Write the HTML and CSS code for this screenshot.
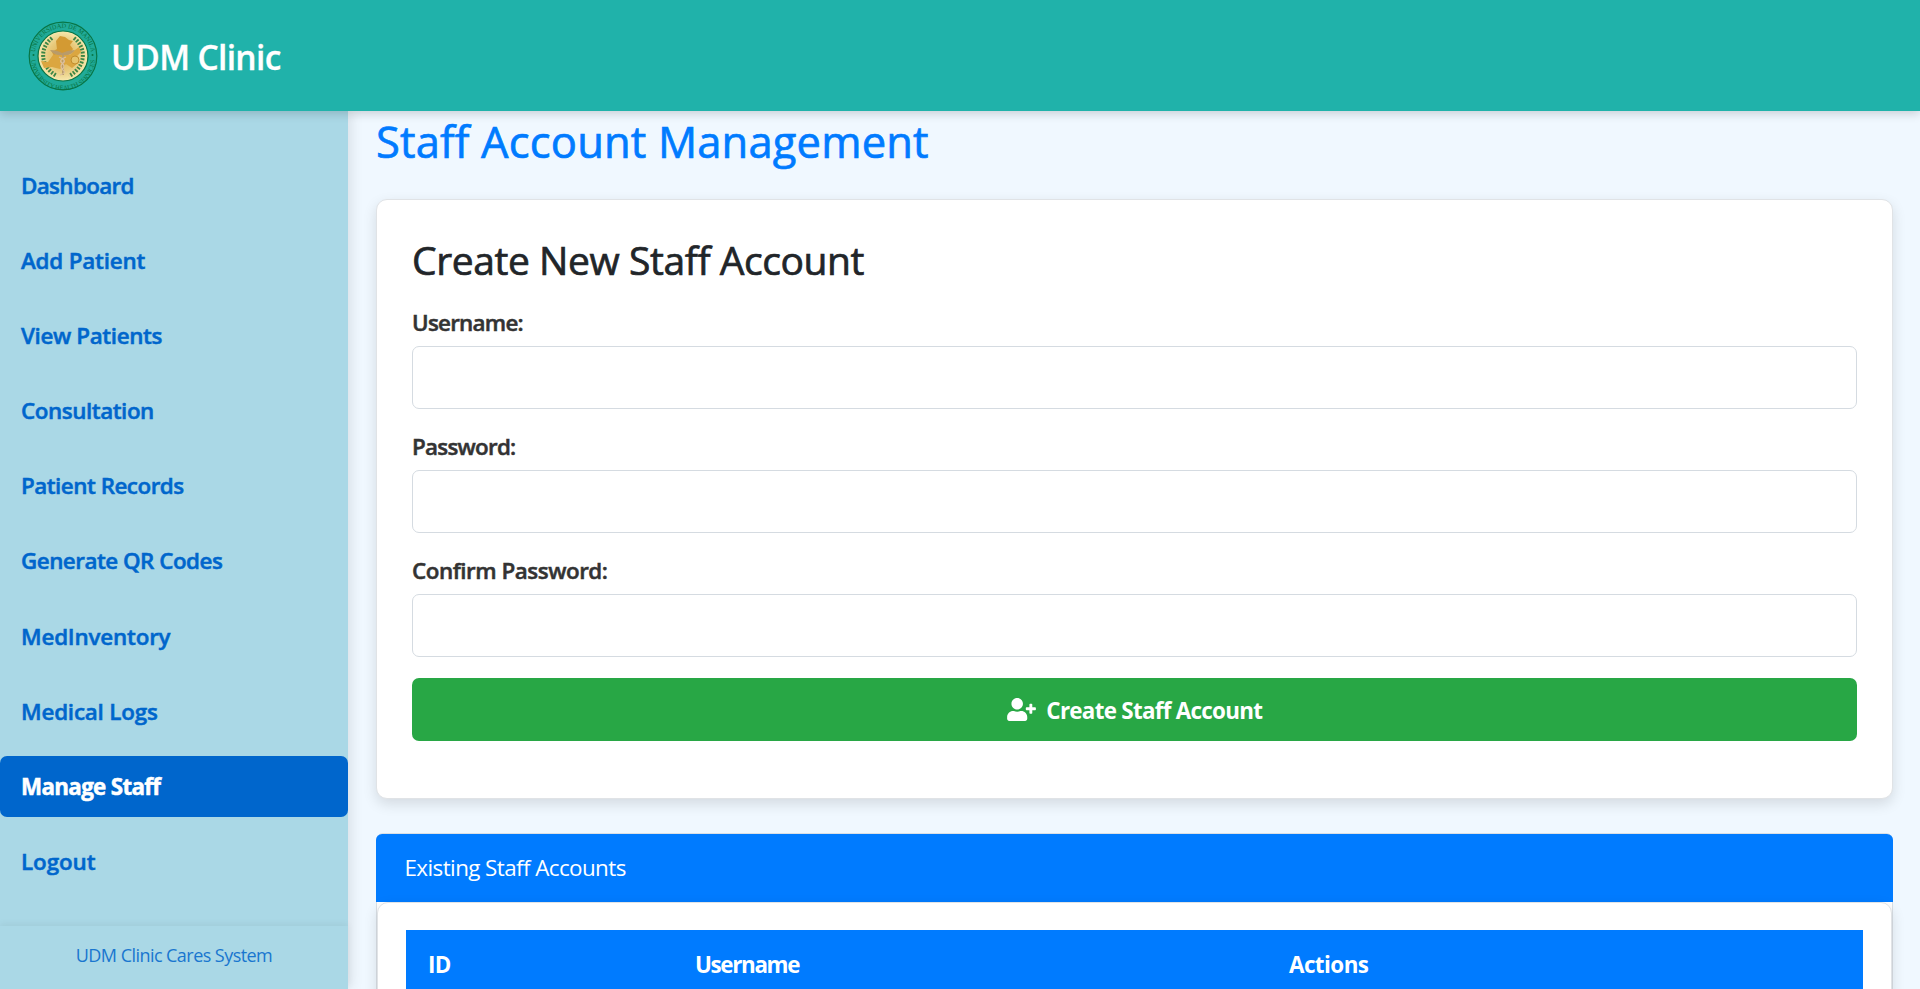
FILE: index.html
```html
<!DOCTYPE html>
<html lang="en">
<head>
<meta charset="utf-8">
<title>UDM Clinic</title>
<link rel="stylesheet" href="styles.css">
</head>
<body>
<header class="topbar">
  <svg class="logo" viewBox="0 0 70 70" role="img" aria-label="University seal">
    <defs>
      <radialGradient id="gold"><stop offset="0" stop-color="#dfae4c"/><stop offset=".6" stop-color="#e8ca7c"/><stop offset="1" stop-color="#f6e8ae"/></radialGradient>
      <path id="ringTop" d="M6.800 39.500A28.500 28.500 0 1 1 63.200 39.500"/>
      <path id="ringBottom" d="M3 37A32 32 0 0 0 67 37"/>
    </defs>
    <circle cx="35" cy="35" r="33.800" fill="#20ab98" stroke="#087545" stroke-width="1.200"/>
    <circle cx="35" cy="35" r="25" fill="url(#gold)" stroke="#087545" stroke-width="1.200"/>
    <g class="seal-text">
      <text><textPath href="#ringTop" startOffset="50%" text-anchor="middle">UNIVERSIDAD DE MANILA</textPath></text>
      <text><textPath href="#ringBottom" startOffset="50%" text-anchor="middle">UNIVERSITY HEALTH SERVICES</textPath></text>
    </g>
    <circle cx="5.500" cy="34" r="1" fill="#087545"/><circle cx="64.500" cy="34" r="1" fill="#087545"/>
    <g fill="none" stroke="#3b8545" stroke-width="4" stroke-dasharray="1.800 1.500">
      <path d="M24 17C11 27 12 46 29 55"/><path d="M46 17C59 27 58 46 41 55"/>
    </g>
    <path d="M28 20l4-5 5 1 4 3 4 1-3 4 3 4-4 5-6 1-5-2-4 3-2-4 5-3z" fill="#d39a33"/>
    <path d="M13 40l7 1 5-7 8-2 9 2 5-5 4-3 2 5-5 5 2 6-6 5-6-4-6 5-8-2-8 1z" fill="#dba640"/>
    <circle cx="47" cy="39" r="4" fill="#e6c36c" stroke="#c18c2d"/>
    <path d="M22 29q7 0 12 3 6-3 13-3-4 6-11 5v20h-2V34q-8 1-12-5z" fill="#b99b69"/>
    <path d="M31 36q8 3 4 6t0 7q4 3-3 5M38 36q-8 3-4 6t0 7" fill="none" stroke="#dcc09c" stroke-width="1.300"/>
  </svg>
  <span class="brand">UDM Clinic</span>
</header>
<div class="layout">
  <aside class="sidebar">
    <nav class="menu">
      <a class="item dashboard">Dashboard</a>
      <a class="item add-patient">Add Patient</a>
      <a class="item view-patients">View Patients</a>
      <a class="item consultation">Consultation</a>
      <a class="item">Patient Records</a>
      <a class="item">Generate QR Codes</a>
      <a class="item inventory">MedInventory</a>
      <a class="item logs">Medical Logs</a>
      <a class="item active">Manage Staff</a>
      <a class="item logout">Logout</a>
    </nav>
    <footer class="side-footer"><span>UDM Clinic Cares System</span></footer>
  </aside>
  <main class="content">
    <h1 class="page-title">Staff Account Management</h1>
    <form class="card form-card">
      <h2 class="form-title">Create New Staff Account</h2>
      <label class="field"><span class="label">Username:</span><input class="input" type="text"></label>
      <label class="field"><span class="label">Password:</span><input class="input" type="password"></label>
      <label class="field"><span class="label confirm">Confirm Password:</span><input class="input" type="password"></label>
      <button class="submit" type="button">
        <svg class="user-plus" viewBox="0 0 640 512"><path fill="currentColor" d="M624 208h-64v-64c0-8.800-7.200-16-16-16h-32c-8.800 0-16 7.200-16 16v64h-64c-8.800 0-16 7.200-16 16v32c0 8.800 7.200 16 16 16h64v64c0 8.800 7.200 16 16 16h32c8.800 0 16-7.200 16-16v-64h64c8.800 0 16-7.200 16-16v-32c0-8.800-7.200-16-16-16zm-400 48c70.700 0 128-57.300 128-128S294.700 0 224 0 96 57.300 96 128s57.300 128 128 128zm89.600 32h-16.700c-22.200 10.200-46.900 16-72.900 16s-50.600-5.800-72.900-16h-16.700C60.200 288 0 348.200 0 422.400V464c0 26.500 21.500 48 48 48h352c26.500 0 48-21.500 48-48v-41.600c0-74.200-60.200-134.400-134.400-134.400z"/></svg>
        <span class="submit-text">Create Staff Account</span>
      </button>
    </form>
    <section class="list-card">
      <div class="list-header">Existing Staff Accounts</div>
      <div class="card list-body">
        <div class="table-head"><span>ID</span><span class="th-user">Username</span><span>Actions</span></div>
      </div>
    </section>
  </main>
</div>
</body>
</html>
```
FILE: styles.css
```css
* { box-sizing: border-box; }
html, body { height: 100%; }
body {
  margin: 0;
  overflow: hidden;
  display: flex;
  flex-direction: column;
  background: #f0f8ff;
  font-family: "Open Sans", "Noto Sans", sans-serif;
  font-size: 22.4px;
  line-height: 33px;
  color: #212529;
}
.topbar {
  flex: none;
  height: 111px;
  padding-left: 27.5px;
  display: flex;
  align-items: center;
  gap: 13.5px;
  background: #20b2aa;
  box-shadow: 0 3px 9px rgba(0, 0, 0, .16);
  position: relative;
  z-index: 2;
}
.logo { width: 70px; height: 70px; }
.seal-text { font: 400 6.4px "Liberation Serif", serif; fill: #087545; }
.brand {
  padding-top: 2px;
  color: #fff;
  font-size: 33.5px;
  font-weight: 600;
  line-height: 44px;
  letter-spacing: -.65px;
  -webkit-text-stroke: .3px currentColor;
}
.layout { flex: 1; min-height: 0; display: flex; }
.sidebar {
  flex: none;
  width: 348px;
  display: flex;
  flex-direction: column;
  background: #aad8e6;
  box-shadow: 3px 0 12px rgba(0, 0, 0, .1);
}
.menu {
  flex: 1;
  min-height: 0;
  padding-top: 44px;
  display: flex;
  flex-direction: column;
  gap: 14.65px;
}
.item {
  flex: none;
  height: 60.5px;
  padding-left: 21px;
  display: flex;
  align-items: center;
  border-radius: 7px;
  color: #0066cc;
  font-weight: 600;
  letter-spacing: -.5px;
  -webkit-text-stroke: .5px currentColor;
}
.item.dashboard { letter-spacing: -.65px; }
.item.add-patient { letter-spacing: -.2px; }
.item.view-patients { letter-spacing: -.37px; }
.item.consultation { letter-spacing: -.45px; }
.item.inventory, .item.logs { letter-spacing: -.2px; }
.item.logout { letter-spacing: -.1px; }
.item.active { background: #0066cc; color: #fff; font-weight: 700; letter-spacing: -.68px; }
.side-footer {
  flex: none;
  height: 63px;
  display: flex;
  justify-content: center;
  padding-top: 13px;
  color: #0066cc;
  font-size: 18px;
  letter-spacing: -.55px;
  box-shadow: 0 -2px 7px rgba(0, 0, 0, .06);
}
.side-footer span { opacity: .85; }
.content { flex: 1; min-width: 0; padding: 3px 27px 0 28px; }
.page-title {
  margin: 0 0 29px;
  font-size: 43.5px;
  line-height: 56px;
  font-weight: 500;
  letter-spacing: .17px;
  color: #007bff;
  -webkit-text-stroke: .7px currentColor;
}
.card {
  background: #fff;
  border: 1px solid #e0e3e6;
  border-radius: 11px;
  box-shadow: 0 5px 14px rgba(0, 0, 0, .12);
}
.form-card { height: 600px; padding: 36px 35px; }
.form-title {
  margin: 0 0 21px;
  font-size: 39px;
  line-height: 48px;
  font-weight: 500;
  letter-spacing: -.42px;
  -webkit-text-stroke: .7px currentColor;
}
.field { display: block; margin-bottom: 20.9px; }
.label {
  display: block;
  height: 33px;
  margin-bottom: 7.5px;
  padding-top: .5px;
  color: #333;
  font-weight: 600;
  letter-spacing: -.75px;
  -webkit-text-stroke: .5px currentColor;
}
.label.confirm { letter-spacing: -.47px; }
.input { display: block; width: 100%; height: 63px; border: 1px solid #d5dbe1; border-radius: 7px; background: #fff; }
.submit {
  width: 100%;
  height: 63px;
  padding: 0;
  border: 0;
  border-radius: 7px;
  display: flex;
  align-items: center;
  justify-content: center;
  gap: 10.5px;
  background: #28a745;
  color: #fff;
  font: 700 22.4px "Open Sans", sans-serif;
}
.submit-text { padding-top: 2px; letter-spacing: -.72px; }
.user-plus { width: 29px; height: 23px; }
.list-card { margin-top: 34px; border: 1px solid #d9dfe5; border-radius: 7px; background: #fff; }
.list-header {
  height: 68px;
  margin: 0 -1px;
  padding: 17px 28.5px;
  background: #007bff;
  color: #fff;
  border-radius: 6px 6px 0 0;
  letter-spacing: -.58px;
}
.list-body { height: 300px; padding: 27px 28px 0 28px; }
.table-head {
  display: grid;
  grid-template-columns: 267px 594px 1fr;
  padding: 18px 22px;
  height: 100px;
  background: #007bff;
  color: #fff;
  font-weight: 700;
  letter-spacing: -.55px;
}
.th-user { letter-spacing: -1.35px; }
```
